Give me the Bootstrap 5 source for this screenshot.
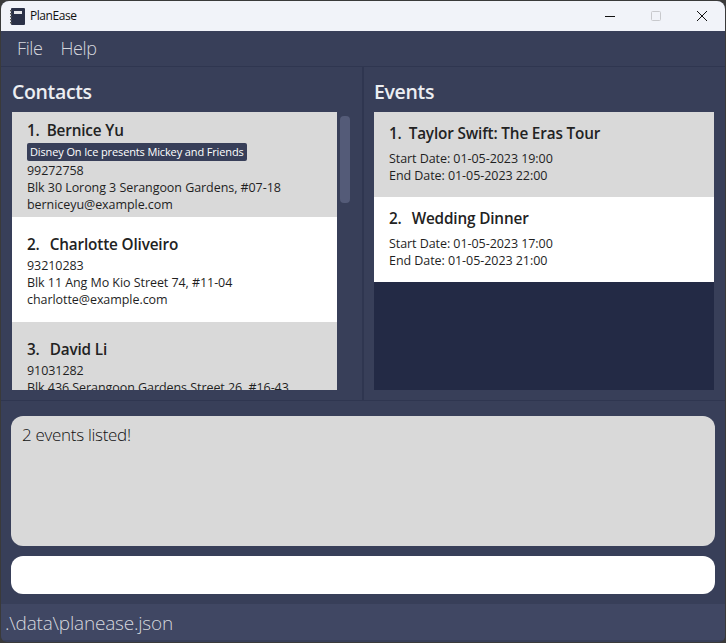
<!DOCTYPE html>
<html lang="en">
<head>
<meta charset="utf-8">
<title>PlanEase</title>
<link href="https://cdn.jsdelivr.net/npm/bootstrap@5.3.0/dist/css/bootstrap.min.css" rel="stylesheet">
<style>
html,body{height:100%;margin:0;overflow:hidden}
body{background:#3a3a3a;font-family:"Open Sans","Noto Sans",sans-serif;color:#1f1f1f}
.win{width:724px;height:641px;margin:1px 1px 0;border-radius:8px 8px 6px 6px;overflow:hidden;background:#383f59}
.tbar{height:30px;background:#f1f3f9;font-size:12px;letter-spacing:-.45px;color:#111}
.tbar svg{display:block}
.appicon{margin-left:9px;margin-right:5px}
.wbtn{width:46px;height:30px}
.mbar{height:36px;padding-left:16px;gap:18px;color:#d5d7de;font-size:18px;font-weight:300;letter-spacing:-.4px;border-bottom:1px solid #2f3650}
.panes{height:334px;border-bottom:1px solid #2f3650}
.pane{padding:0 11px 10px;min-width:0}
.pane-l{width:361px;padding-right:0;flex:none}
.pane-r{flex:1;padding-left:10px;border-left:2px solid #2f3650}
.phead{height:45px;color:#eceef2;font-size:19.5px;font-weight:600;letter-spacing:-.35px;padding-top:12px;line-height:26px}
.scrollarea{height:278px;overflow:hidden;gap:3px}
.clist{width:325px;height:278px;overflow:hidden}
.thumb{width:10px;height:87px;margin-top:4px;background:#545b78;border-radius:4px}
.elist{height:278px;background:#232a45}
.cell{background:#d9d9d9;padding:0 15px;font-size:12.5px;line-height:17px;letter-spacing:-.06px}
.cell:nth-child(even){background:#fff}
.ccell{height:105px;padding-top:3px}
.ecell{height:85px;padding-bottom:3px}
.nm{font-size:15.3px;font-weight:600;line-height:20px;letter-spacing:-.15px;color:#222}
.nm span{margin-right:10px}
.cell:first-child .nm span{margin-right:7px}
.ccell .nm{margin-bottom:3px}
.ecell .nm{margin-bottom:7px}
.chip{align-self:flex-start;background:#383f59;color:#fff;border-radius:2px;font-size:11px;line-height:18px;padding:0 3px;margin-bottom:1px;letter-spacing:-.13px}
.blankline{height:17px}
.lower{padding:15px 10px 0}
.result{height:130px;background:#d9d9d9;border-radius:12px;padding:7px 11px;font-size:17px;line-height:24px;color:#111;letter-spacing:-.3px;font-weight:300}
.cmd{height:38px;background:#fff;border-radius:12px;margin-top:10px}
.sbar{height:36px;margin-top:10px;background:#404763;color:#d5d7de;font-size:19px;font-weight:300;padding:0 4px;line-height:38px;letter-spacing:-.2px}
</style>
</head>
<body>
<div class="win d-flex flex-column">
  <div class="tbar d-flex align-items-center">
    <svg class="appicon" width="15" height="17" viewBox="0 0 15 17"><rect x="1" y="0" width="14" height="17" rx="1" fill="#2b3147"/><rect x="0" y="2" width="2" height="1.4" fill="#555"/><rect x="0" y="5" width="2" height="1.4" fill="#555"/><rect x="0" y="8" width="2" height="1.4" fill="#555"/><rect x="0" y="11" width="2" height="1.4" fill="#555"/><rect x="0" y="14" width="2" height="1.4" fill="#555"/><rect x="4" y="3" width="8" height="3" fill="#e8e8ea"/></svg>
    <span>PlanEase</span>
    <div class="ms-auto d-flex">
      <div class="wbtn d-flex align-items-center justify-content-center"><svg width="10" height="10"><path d="M0 5.5h10" stroke="#111" stroke-width="1"/></svg></div>
      <div class="wbtn d-flex align-items-center justify-content-center"><svg width="10" height="10"><rect x=".5" y=".5" width="9" height="9" rx="1" fill="none" stroke="#c8c9cd"/></svg></div>
      <div class="wbtn d-flex align-items-center justify-content-center"><svg width="10" height="10"><path d="M0 0l10 10M10 0L0 10" stroke="#111" stroke-width="1"/></svg></div>
    </div>
  </div>
  <div class="mbar d-flex align-items-center"><span>File</span><span>Help</span></div>
  <div class="panes d-flex">
    <div class="pane pane-l">
      <div class="phead">Contacts</div>
      <div class="scrollarea d-flex">
        <div class="clist">
          <div class="cell ccell d-flex flex-column justify-content-center">
            <div class="nm"><span>1.</span>Bernice Yu</div>
            <div class="chip">Disney On Ice presents Mickey and Friends</div>
            <div>99272758</div><div>Blk 30 Lorong 3 Serangoon Gardens, #07-18</div><div>berniceyu@example.com</div>
          </div>
          <div class="cell ccell d-flex flex-column justify-content-center">
            <div class="nm"><span>2.</span>Charlotte Oliveiro</div>
            <div>93210283</div><div>Blk 11 Ang Mo Kio Street 74, #11-04</div><div>charlotte@example.com</div>
          </div>
          <div class="cell ccell d-flex flex-column justify-content-center">
            <div class="nm"><span>3.</span>David Li</div>
            <div>91031282</div><div>Blk 436 Serangoon Gardens Street 26, #16-43</div><div class="blankline"></div>
          </div>
        </div>
        <div class="thumb"></div>
      </div>
    </div>
    <div class="pane pane-r">
      <div class="phead">Events</div>
      <div class="elist">
        <div class="cell ecell d-flex flex-column justify-content-center">
          <div class="nm"><span>1.</span>Taylor Swift: The Eras Tour</div>
          <div>Start Date: 01-05-2023 19:00</div><div>End Date: 01-05-2023 22:00</div>
        </div>
        <div class="cell ecell d-flex flex-column justify-content-center">
          <div class="nm"><span>2.</span>Wedding Dinner</div>
          <div>Start Date: 01-05-2023 17:00</div><div>End Date: 01-05-2023 21:00</div>
        </div>
      </div>
    </div>
  </div>
  <div class="lower">
    <div class="result">2 events listed!</div>
    <div class="cmd"></div>
  </div>
  <div class="sbar">.\data\planease.json</div>
</div>
</body>
</html>
